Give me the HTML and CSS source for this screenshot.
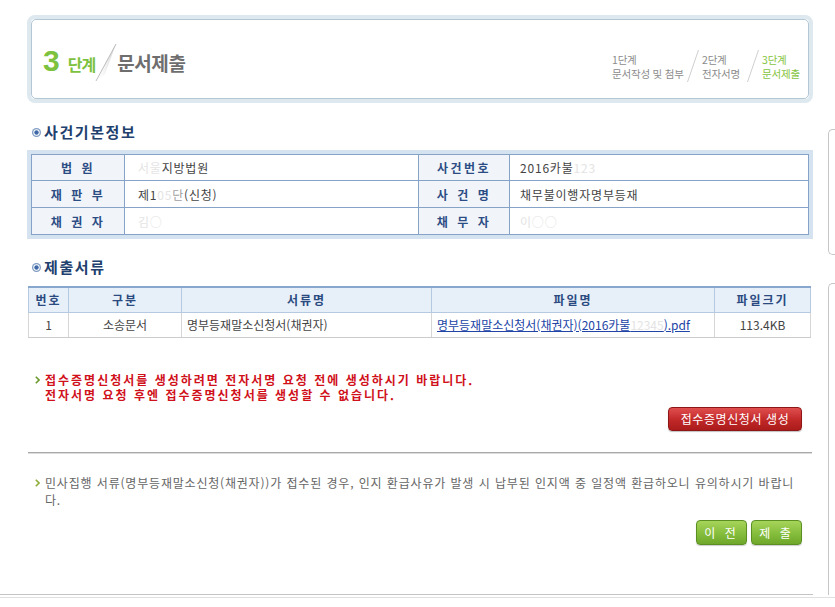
FILE: index.html
```html
<!DOCTYPE html>
<html lang="ko">
<head>
<meta charset="utf-8">
<title>문서제출</title>
<link rel="stylesheet" href="styles.css">
</head>
<body>
<div class="page">
  <div class="main">
    <div class="step-frame">
      <div class="step-box">
        <div class="step-title">
          <span class="step-num">3</span>
          <span class="step-word">단계</span>
          <svg class="step-fold" width="24" height="38" viewBox="0 0 24 38">
            <defs>
              <linearGradient id="fold" x1="1" y1="0" x2="0" y2="0">
                <stop offset="0" stop-color="#c9c9c9"/>
                <stop offset="1" stop-color="#ffffff" stop-opacity="0"/>
              </linearGradient>
            </defs>
            <polygon points="23,0 2,38 12,30" fill="url(#fold)"/>
            <line x1="23" y1="0" x2="3" y2="37" stroke="#bdbdbd" stroke-width="1"/>
          </svg>
          <span class="step-name">문서제출</span>
        </div>
        <div class="step-nav">
          <div class="nav-item n1"><span>1단계</span><span>문서작성 및 첨부</span></div>
          <svg class="nav-slash" width="12" height="32" viewBox="0 0 12 32"><line x1="11.5" y1="0" x2="0.5" y2="32" stroke="#cfcfcf" stroke-width="1"/></svg>
          <div class="nav-item n2"><span>2단계</span><span>전자서명</span></div>
          <svg class="nav-slash" width="12" height="32" viewBox="0 0 12 32"><line x1="11.5" y1="0" x2="0.5" y2="32" stroke="#cfcfcf" stroke-width="1"/></svg>
          <div class="nav-item n3 current"><span>3단계</span><span>문서제출</span></div>
        </div>
      </div>
    </div>

    <h2 class="sec-title first">
      <svg class="bullet" width="9" height="9" viewBox="0 0 9 9"><circle cx="4.5" cy="4.5" r="4.5" fill="#7f9cc4"/><circle cx="4.5" cy="4.5" r="3.2" fill="#ffffff"/><circle cx="4.5" cy="4.5" r="2.2" fill="#3f68a6"/></svg>
      사건기본정보
    </h2>
    <div class="info-frame">
      <div class="info-grid">
        <div class="lbl">법 원</div>
        <div class="val v1"><span class="blur">서울</span>지방법원</div>
        <div class="lbl">사건번호</div>
        <div class="val v2">2016카불<span class="blur">123</span></div>

        <div class="lbl">재 판 부</div>
        <div class="val v1">제1<span class="blur">05</span><span class="half">단</span>(신청)</div>
        <div class="lbl">사 건 명</div>
        <div class="val v2">채무불이행자명부등재</div>

        <div class="lbl">채 권 자</div>
        <div class="val v1"><span class="blur">김○</span></div>
        <div class="lbl">채 무 자</div>
        <div class="val v2"><span class="blur">이○○</span></div>
      </div>
    </div>

    <h2 class="sec-title second">
      <svg class="bullet" width="9" height="9" viewBox="0 0 9 9"><circle cx="4.5" cy="4.5" r="4.5" fill="#7f9cc4"/><circle cx="4.5" cy="4.5" r="3.2" fill="#ffffff"/><circle cx="4.5" cy="4.5" r="2.2" fill="#3f68a6"/></svg>
      제출서류
    </h2>
    <table class="docs">
      <colgroup>
        <col class="c-no"><col class="c-type"><col class="c-name"><col class="c-file"><col class="c-size">
      </colgroup>
      <thead>
        <tr><th>번호</th><th>구분</th><th>서류명</th><th>파일명</th><th>파일크기</th></tr>
      </thead>
      <tbody>
        <tr>
          <td>1</td>
          <td>소송문서</td>
          <td class="left">명부등재말소신청서(채권자)</td>
          <td class="left"><a href="#">명부등재말소신청서(채권자)(2016카불<span class="blur">12345</span>).pdf</a></td>
          <td>113.4KB</td>
        </tr>
      </tbody>
    </table>

    <div class="warn">
      <svg class="arrow" width="5" height="8" viewBox="0 0 5 8"><polyline points="0.8,0.8 4,4 0.8,7.2" fill="none" stroke="#6c9a2e" stroke-width="1.6"/></svg>
      <p>접수증명신청서를 생성하려면 전자서명 요청 전에 생성하시기 바랍니다.<br>전자서명 요청 후엔 접수증명신청서를 생성할 수 없습니다.</p>
    </div>
    <div class="btn-row red-row">
      <button class="btn btn-red" type="button">접수증명신청서 생성</button>
    </div>

    <hr class="divider">

    <div class="note">
      <svg class="arrow" width="5" height="8" viewBox="0 0 5 8"><polyline points="0.8,0.8 4,4 0.8,7.2" fill="none" stroke="#8fae3a" stroke-width="1.6"/></svg>
      <p>민사집행 서류(명부등재말소신청(채권자))가 접수된 경우, 인지 환급사유가 발생 시 납부된 인지액 중 일정액 환급하오니 유의하시기 바랍니다.</p>
    </div>
    <div class="btn-row green-row">
      <button class="btn btn-green" type="button">이 전</button>
      <button class="btn btn-green" type="button">제 출</button>
    </div>
  </div>
  <div class="side">
    <div class="side-box one"></div>
    <div class="side-box two"></div>
  </div>
</div>
<div class="foot-line"></div>
</body>
</html>
```

FILE: styles.css
```css
* { box-sizing: border-box; }
html, body { margin: 0; padding: 0; background: #fff; }
body {
  font-family: "Noto Sans CJK KR", "Noto Sans", sans-serif;
  font-size: 12px;
  color: #3a3a3a;
}

.page { display: flex; height: 596px; }
.main {
  width: 813px;
  height: 595px;
  padding-left: 27px;
  border-bottom: 1px solid #c4c4c4;
}
.side { flex: 1; padding-left: 15px; padding-top: 129px; }
.side-box { border: 1px solid #c6c6c6; border-right: none; }
.side-box.one { height: 126px; border-radius: 5px 0 0 5px; }
.side-box.two { margin-top: 28px; height: 312px; border-bottom: none; border-radius: 5px 0 0 0; }
.foot-line { margin-top: 1px; border-top: 1px solid #e0e0e0; }

/* step header */
.step-frame {
  margin-top: 15px;
  width: 786px;
  border: 4px solid #dde8ef;
  border-radius: 8px;
}
.step-box {
  height: 80px;
  border: 1px solid #b3c7d4;
  border-radius: 5px;
  display: flex;
  justify-content: space-between;
  padding: 0 8px 0 11px;
}
.step-title {
  display: flex;
  align-items: baseline;
  padding-top: 26px;
}
.step-num {
  font-family: "Liberation Sans", Arial, sans-serif;
  font-size: 30px;
  line-height: 30px;
  font-weight: bold;
  color: #7dc23e;
}
.step-word {
  margin-left: 8px;
  font-size: 16px;
  line-height: 20px;
  font-weight: bold;
  letter-spacing: -1px;
  color: #7dc23e;
}
.step-fold { align-self: flex-start; margin: -2px 0 0 -2px; flex: none; }
.step-name {
  font-size: 19px;
  line-height: 20px;
  font-weight: bold;
  color: #6e6e6e;
  letter-spacing: -0.4px;
}
.step-nav { display: flex; align-items: flex-start; padding-top: 30px; }
.nav-item {
  margin-top: 3px;
  display: flex;
  flex-direction: column;
  font-size: 10.5px;
  line-height: 14px;
  letter-spacing: -0.2px;
  color: #8c8c8c;
  white-space: nowrap;
}
.nav-item.n1 { width: 72px; }
.nav-item.n2 { width: 42px; }
.nav-item.n3 { width: 38px; }
.nav-item.current { color: #86c441; }
.nav-slash { margin: 0 3px; flex: none; }

/* section titles */
.sec-title {
  display: flex;
  align-items: center;
  margin: 0;
  padding-left: 5px;
  font-size: 15px;
  line-height: 20px;
  font-weight: bold;
  color: #22406e;
  letter-spacing: 1.6px;
}
.sec-title.first { margin-top: 19px; }
.sec-title.second { margin-top: 18px; }
.bullet { margin-right: 3px; flex: none; }

/* info table */
.info-frame {
  margin-top: 8px;
  width: 786px;
  border: 4px solid #d5e2ef;
}
.info-grid {
  display: grid;
  grid-template-columns: 93px 294px 91px 1fr;
  grid-template-rows: 26px 27px 26px;
  border: 1px solid #85a3c7;
}
.info-grid > div { border-right: 1px solid #85a3c7; border-bottom: 1px solid #85a3c7; display: flex; align-items: center; }
.info-grid > div:nth-child(4n) { border-right: none; }
.info-grid > div:nth-last-child(-n+4) { border-bottom: none; }
.lbl {
  justify-content: center;
  background: #f1f5fa;
  font-weight: bold;
  color: #2c4d84;
  letter-spacing: 2.5px;
  word-spacing: 1px;
}
.val { color: #444; letter-spacing: 0.8px; }
.val.v1 { padding-left: 13px; }
.val.v2 { padding-left: 10px; }
.blur { color: #e4e4e4; }
.half { color: #a0a0a0; }

/* docs table */
.docs {
  margin: 9px 0 0 1px;
  width: 782px;
  border-collapse: collapse;
  table-layout: fixed;
}
.c-no { width: 40px; }
.c-type { width: 113px; }
.c-name { width: 250px; }
.c-file { width: 283px; }
.c-size { width: 96px; }
.docs th {
  height: 25px;
  padding: 0;
  background: #e7eff8;
  border-top: 2px solid #88a7cc;
  border-left: 1px solid #b5c9e0;
  border-right: 1px solid #b5c9e0;
  border-bottom: 1px solid #b5c9e0;
  color: #2a4a80;
  font-size: 12px;
  font-weight: bold;
  letter-spacing: 2px;
}
.docs td {
  height: 25px;
  padding: 0;
  text-align: center;
  border-left: 1px solid #d6d6d6;
  border-right: 1px solid #d6d6d6;
  border-bottom: 1px solid #cccccc;
  color: #444;
  white-space: nowrap;
}
.docs td.left { text-align: left; padding-left: 5px; }
.docs a { color: #2144a6; text-decoration: underline; }

/* warning */
.warn {
  display: flex;
  align-items: flex-start;
  margin: 34px 0 0 8px;
}
.arrow { margin: 4px 5px 0 0; flex: none; }
.warn p {
  margin: 0;
  font-size: 12px;
  line-height: 15px;
  font-weight: bold;
  color: #d0101a;
  letter-spacing: 2px;
}

.btn-row { display: flex; justify-content: flex-end; gap: 4px; padding-right: 11px; }
.red-row { margin-top: 5px; }
.green-row { margin-top: 12px; }
.btn {
  font-family: "Noto Sans CJK KR", "Noto Sans", sans-serif;
  font-size: 12px;
  color: #fff;
  padding: 0;
  border-radius: 4px;
  cursor: pointer;
}
.btn-red {
  width: 134px;
  height: 24px;
  background: linear-gradient(#e04e4e, #c12828 55%, #ab1b1b);
  border: 1px solid #8f1616;
  box-shadow: 0 1px 1px rgba(0,0,0,0.25);
  letter-spacing: 0.6px;
}
.btn-green {
  width: 51px;
  height: 25px;
  background: linear-gradient(#a6d45a, #85bd3c 55%, #6fa72b);
  border: 1px solid #5b8f22;
  letter-spacing: 3px;
  box-shadow: 0 1px 1px rgba(0,0,0,0.2);
}

.divider {
  margin: 21px 0 0 1px;
  width: 784px;
  height: 0;
  border: 0;
  border-top: 1px solid #a9a9a9;
  border-bottom: 1px solid #dcdcdc;
}

.note {
  display: flex;
  align-items: flex-start;
  margin: 20px 0 0 8px;
}
.note p {
  margin: 0;
  width: 758px;
  font-size: 12px;
  line-height: 17px;
  color: #666;
  letter-spacing: 0.8px;
  word-spacing: 0.3px;
}
.note .arrow { margin-top: 5px; }
```
